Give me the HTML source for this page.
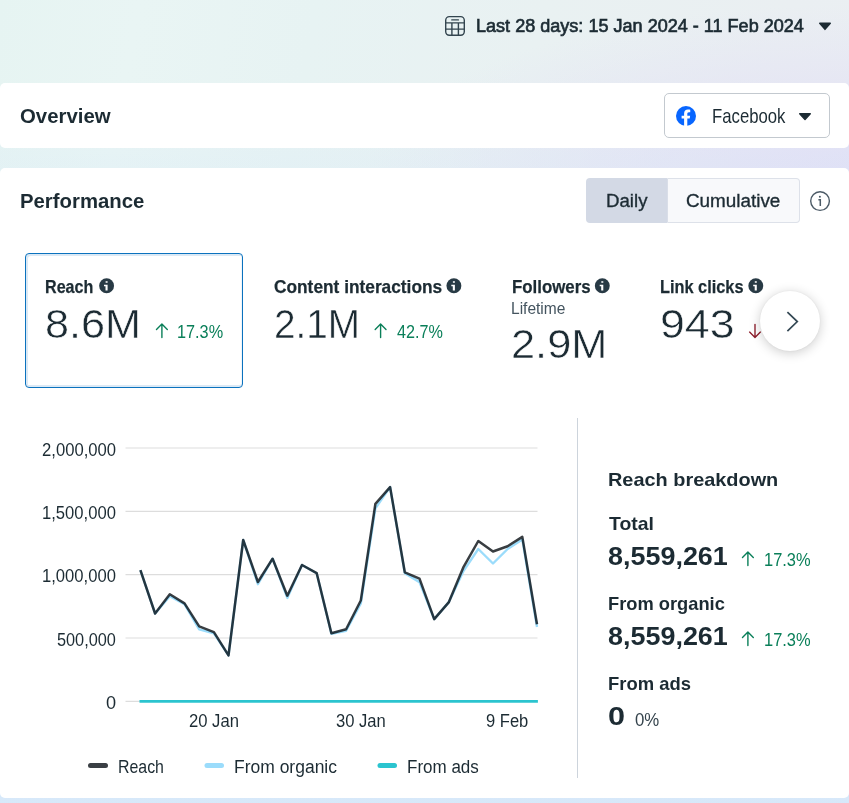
<!DOCTYPE html>
<html><head><meta charset="utf-8">
<style>
*{box-sizing:border-box;margin:0;padding:0}
html,body{width:849px;height:803px;overflow:hidden}
body{font-family:"Liberation Sans",sans-serif;color:#1c2b33;position:relative;
background:linear-gradient(to bottom,rgba(214,232,250,0) 0%,rgba(214,232,250,0) 14%,rgba(214,232,250,.2) 20%,rgba(214,232,250,.95) 100%),radial-gradient(ellipse 480px 170px at 100% 175px,rgba(226,223,245,1) 0%,rgba(226,223,245,.55) 50%,rgba(226,223,245,0) 100%),linear-gradient(100deg,#e6f4f2 0%,#e9f5f4 14%,#e7f3f3 32%,#e9f1f2 55%,#eaeff2 80%,#ebeff3 100%);}
.abs{position:absolute}
.card{position:absolute;background:#fff;border-radius:5px}
.t{position:absolute;white-space:nowrap;line-height:1;transform-origin:0 0}
</style></head><body>
<!-- top bar icons -->
<svg class="abs" style="left:440px;top:12px" width="30" height="28" viewBox="440 12 30 28" fill="none" stroke="#33454f" stroke-width="1.4">
<rect x="445.7" y="16.6" width="18.6" height="18.6" rx="3.6"/>
<path d="M445.7 22.9H464.3M445.7 29.1H464.3M451.9 22.9V35.2M458.4 22.9V35.2"/>
<path d="M451.8 19.9H458.4" stroke-linecap="round"/>
</svg>
<svg class="abs" style="left:818px;top:22px" width="14" height="9" viewBox="0 0 14 9"><path d="M1.7 1.2H12.3L7 7.4Z" fill="#1c2b33" stroke="#1c2b33" stroke-width="1.4" stroke-linejoin="round"/></svg>

<!-- overview card -->
<div class="card" style="left:0;top:83px;width:849px;height:65px"></div>
<div class="abs" style="left:664px;top:93px;width:166px;height:45px;border:1px solid #c3c9cf;border-radius:5px;background:#fff"></div>
<svg class="abs" style="left:675px;top:105px" width="22" height="22" viewBox="0 0 22 22"><circle cx="11" cy="11" r="10" fill="#0866ff"/><path d="M12.3 21V13.6h2.4l.45-2.9H12.3V8.9c0-.85.4-1.6 1.65-1.6h1.3V4.8s-1.15-.2-2.3-.2c-2.35 0-3.85 1.4-3.85 3.95v2.15H6.6v2.9h2.5V21z" fill="#fff"/></svg>
<svg class="abs" style="left:798px;top:111.7px" width="14" height="9" viewBox="0 0 14 9"><path d="M1.7 1.7H12.3L7 7.6Z" fill="#1c2b33" stroke="#1c2b33" stroke-width="1.4" stroke-linejoin="round"/></svg>

<!-- performance card -->
<div class="card" style="left:0;top:168px;width:849px;height:630px"></div>
<div class="abs" style="left:586px;top:178px;width:81px;height:45px;background:#d3d9e5;border-radius:4px 0 0 4px"></div>
<div class="abs" style="left:666.5px;top:178px;width:133.5px;height:45px;background:#f8f9fb;border:1px solid #dde1e9;border-left-color:#d9dee8;border-radius:0 4px 4px 0"></div>
<svg class="abs" style="left:809px;top:190px" width="22" height="22" viewBox="0 0 22 22" fill="none" stroke="#4b5a66" stroke-width="1.4"><circle cx="11.05" cy="11.05" r="9.35"/><path d="M9.4 9.7H11.3V16.1" stroke-width="1.5"/><circle cx="10.9" cy="6.7" r="1" fill="#4b5a66" stroke="none"/></svg>

<!-- metric cards -->
<div class="abs" style="left:25px;top:253px;width:218px;height:135px;border:1px solid #0b72be;border-radius:4px;box-shadow:inset 2px 2px 0 #dbe9f5,inset 0 -2px 0 #dbe9f5,inset -1px 0 0 #eef5fb"></div>

<svg class="abs" style="left:0;top:270px" width="849" height="90" viewBox="0 270 849 90">
<g transform="translate(106.6 285.8)"><circle r="7.45" fill="#283a45"/><path d="M-1 -4.6h2v1.5h-2zM-2.6 -1.1h3.6v5.9h-2.1v-4.4h-1.5z" fill="#fff"/></g>
<g transform="translate(453.9 285.8)"><circle r="7.45" fill="#283a45"/><path d="M-1 -4.6h2v1.5h-2zM-2.6 -1.1h3.6v5.9h-2.1v-4.4h-1.5z" fill="#fff"/></g>
<g transform="translate(602.3 285.8)"><circle r="7.45" fill="#283a45"/><path d="M-1 -4.6h2v1.5h-2zM-2.6 -1.1h3.6v5.9h-2.1v-4.4h-1.5z" fill="#fff"/></g>
<g transform="translate(755.8 285.8)"><circle r="7.45" fill="#283a45"/><path d="M-1 -4.6h2v1.5h-2zM-2.6 -1.1h3.6v5.9h-2.1v-4.4h-1.5z" fill="#fff"/></g>
<g transform="translate(161.9 338)" fill="none" stroke="#0a7f59" stroke-width="1.4" stroke-linecap="round" stroke-linejoin="round"><path d="M0 -0.5V-13.9M-5.4 -8.6L0 -13.9L5.4 -8.6"/></g>
<g transform="translate(380.6 338)" fill="none" stroke="#0a7f59" stroke-width="1.4" stroke-linecap="round" stroke-linejoin="round"><path d="M0 -0.5V-13.9M-5.4 -8.6L0 -13.9L5.4 -8.6"/></g>
<g fill="none" stroke="#8c1d2b" stroke-width="1.35" stroke-linecap="round" stroke-linejoin="round"><path d="M755 324.3V337.4M749.6 332.1L755 337.5L760.4 332.1"/></g>
</svg>

<div class="abs" style="left:736px;top:268px;width:94px;height:112px;overflow:hidden"><div class="abs" style="left:24px;top:23px;width:60px;height:60px;border-radius:50%;background:#fff;box-shadow:0 2px 12px rgba(0,0,0,.2),0 0 2px rgba(0,0,0,.06)"></div></div>
<svg class="abs" style="left:780px;top:309px" width="24" height="26" viewBox="780 309 24 26" fill="none" stroke="#344854" stroke-width="1.7" stroke-linecap="butt" stroke-linejoin="miter"><path d="M787.4 312.1L797.3 321.6L787.4 331.1"/></svg>

<!-- chart -->
<svg class="abs" style="left:0;top:410px" width="849" height="387" viewBox="0 410 849 387">
<g stroke="#dddddd" stroke-width="1.2">
<path d="M125.5 448H537.5M125.5 511.3H537.5M125.5 574.7H537.5M125.5 638H537.5M125.5 701.4H140"/>
</g>
<path d="M577.5 418V778" stroke="#cdd4dc" stroke-width="1"/>
<polyline fill="none" stroke="#9bdcfb" stroke-width="2.4" stroke-linejoin="round" points="140.4,570.2 155.1,613.5 169.8,596.3 184.5,604.2 199.2,629.4 213.9,633.3 228.5,655.4 243.2,540.0 257.9,584.2 272.6,558.7 287.3,597.9 302.0,565.0 316.7,573.2 331.4,633.7 346.1,630.7 360.8,603.5 375.4,508.3 390.1,487.1 404.8,573.3 419.5,582.1 434.2,619.1 448.9,602.1 463.6,570.8 478.3,549.0 493.0,563.5 507.6,549.0 522.3,539.4 537.0,627.0"/>
<polyline fill="none" stroke="#393e42" stroke-width="2.5" stroke-linejoin="round" style="mix-blend-mode:multiply" points="140.4,570.2 155.1,613.5 169.8,594.3 184.5,603.4 199.2,626.4 213.9,632.1 228.5,655.4 243.2,540.0 257.9,582.0 272.6,558.7 287.3,595.7 302.0,565.0 316.7,573.2 331.4,633.2 346.1,629.2 360.8,600.5 375.4,503.8 390.1,487.1 404.8,572.3 419.5,578.6 434.2,619.1 448.9,602.1 463.6,566.8 478.3,541.0 493.0,551.5 507.6,546.3 522.3,536.9 537.0,624.3"/>
<path d="M139.5 701.4H537.9" stroke="#2bc4cf" stroke-width="2.6"/>
<g stroke-width="5" stroke-linecap="round">
<path d="M90.5 765.5H105.5" stroke="#3a3f44"/>
<path d="M207 765.5H221.5" stroke="#9bdcfb"/>
<path d="M380 765.5H394.5" stroke="#2bc4cf"/>
</g>
<g fill="none" stroke="#0a7f59" stroke-width="1.4" stroke-linecap="round" stroke-linejoin="round">
<path d="M747.9 565.5V552.1M742.5 557.4L747.9 552.1L753.3 557.4"/>
<path d="M747.9 645.5V632.1M742.5 637.4L747.9 632.1L753.3 637.4"/>
</g>
</svg>

<div id="txt" style="position:absolute;left:0;top:0;width:849px;height:803px;will-change:transform">
<div class="t" id="date" style="left:475.76px;top:17.00px;font-size:18.18px;font-weight:400;color:#1c2b33;transform:scaleX(0.9935);-webkit-text-stroke:.65px #1c2b33;">Last 28 days: 15 Jan 2024 - 11 Feb 2024</div>
<div class="t" id="ov" style="left:19.69px;top:106.00px;font-size:20.00px;font-weight:700;color:#1c2b33;transform:scaleX(1.0183);">Overview</div>
<div class="t" id="fb" style="left:711.56px;top:106.00px;font-size:20.36px;font-weight:400;color:#1c2b33;transform:scaleX(0.8217);">Facebook</div>
<div class="t" id="perf" style="left:20.08px;top:192.00px;font-size:19.93px;font-weight:700;color:#1c2b33;transform:scaleX(1.0206);">Performance</div>
<div class="t" id="daily" style="left:605.81px;top:191.00px;font-size:19.20px;font-weight:400;color:#1c2b33;transform:scaleX(0.9723);-webkit-text-stroke:.35px #1c2b33;">Daily</div>
<div class="t" id="cum" style="left:686.16px;top:191.00px;font-size:19.20px;font-weight:400;color:#1c2b33;transform:scaleX(0.9832);-webkit-text-stroke:.35px #1c2b33;">Cumulative</div>
<div class="t" id="m1" style="left:45.23px;top:278.00px;font-size:18.91px;font-weight:700;color:#1c2b33;transform:scaleX(0.8518);-webkit-text-stroke:.25px #1c2b33;">Reach</div>
<div class="t" id="v1" style="left:45.47px;top:305.00px;font-size:40.29px;font-weight:400;color:#1c2b33;transform:scaleX(1.0727);-webkit-text-stroke:.5px #fff;">8.6M</div>
<div class="t" id="p1" style="left:177.46px;top:323.00px;font-size:18.91px;font-weight:400;color:#0a7f59;transform:scaleX(0.8600);">17.3%</div>
<div class="t" id="m2" style="left:273.51px;top:278.00px;font-size:18.91px;font-weight:700;color:#1c2b33;transform:scaleX(0.9149);-webkit-text-stroke:.25px #1c2b33;">Content interactions</div>
<div class="t" id="v2" style="left:274.06px;top:305.00px;font-size:40.29px;font-weight:400;color:#1c2b33;transform:scaleX(0.9620);-webkit-text-stroke:.5px #fff;">2.1M</div>
<div class="t" id="p2" style="left:396.58px;top:323.00px;font-size:18.91px;font-weight:400;color:#0a7f59;transform:scaleX(0.8579);">42.7%</div>
<div class="t" id="m3" style="left:511.59px;top:278.00px;font-size:18.91px;font-weight:700;color:#1c2b33;transform:scaleX(0.8908);-webkit-text-stroke:.25px #1c2b33;">Followers</div>
<div class="t" id="l3" style="left:510.76px;top:300.00px;font-size:16.44px;font-weight:400;color:#44545f;transform:scaleX(0.9451);">Lifetime</div>
<div class="t" id="v3" style="left:511.33px;top:325.00px;font-size:40.29px;font-weight:400;color:#1c2b33;transform:scaleX(1.0766);-webkit-text-stroke:.5px #fff;">2.9M</div>
<div class="t" id="m4" style="left:660.22px;top:278.00px;font-size:18.91px;font-weight:700;color:#1c2b33;transform:scaleX(0.8632);-webkit-text-stroke:.25px #1c2b33;">Link clicks</div>
<div class="t" id="v4" style="left:660.21px;top:305.00px;font-size:40.29px;font-weight:400;color:#1c2b33;transform:scaleX(1.1083);-webkit-text-stroke:.5px #fff;">943</div>
<div class="t" id="y1" style="left:41.57px;top:442.00px;font-size:17.45px;font-weight:400;color:#1c2b33;transform:scaleX(0.9550);">2,000,000</div>
<div class="t" id="y2" style="left:41.74px;top:505.00px;font-size:17.45px;font-weight:400;color:#1c2b33;transform:scaleX(0.9528);">1,500,000</div>
<div class="t" id="y3" style="left:41.74px;top:568.00px;font-size:17.45px;font-weight:400;color:#1c2b33;transform:scaleX(0.9528);">1,000,000</div>
<div class="t" id="y4" style="left:56.75px;top:632.00px;font-size:17.45px;font-weight:400;color:#1c2b33;transform:scaleX(0.9344);">500,000</div>
<div class="t" id="y5" style="left:105.66px;top:695.00px;font-size:17.45px;font-weight:400;color:#1c2b33;transform:scaleX(1.0409);">0</div>
<div class="t" id="x1" style="left:189.07px;top:713.00px;font-size:17.45px;font-weight:400;color:#1c2b33;transform:scaleX(0.9537);">20 Jan</div>
<div class="t" id="x2" style="left:336.10px;top:713.00px;font-size:17.45px;font-weight:400;color:#1c2b33;transform:scaleX(0.9511);">30 Jan</div>
<div class="t" id="x3" style="left:486.34px;top:713.00px;font-size:17.45px;font-weight:400;color:#1c2b33;transform:scaleX(0.9493);">9 Feb</div>
<div class="t" id="lg1" style="left:118.33px;top:758.00px;font-size:18.04px;font-weight:400;color:#1c2b33;transform:scaleX(0.8815);">Reach</div>
<div class="t" id="lg2" style="left:234.10px;top:758.00px;font-size:18.04px;font-weight:400;color:#1c2b33;transform:scaleX(0.9697);">From organic</div>
<div class="t" id="lg3" style="left:406.64px;top:758.00px;font-size:18.04px;font-weight:400;color:#1c2b33;transform:scaleX(0.9434);">From ads</div>
<div class="t" id="rb" style="left:607.61px;top:471.00px;font-size:18.91px;font-weight:700;color:#1c2b33;transform:scaleX(1.0523);">Reach breakdown</div>
<div class="t" id="r1" style="left:608.61px;top:515.00px;font-size:18.91px;font-weight:700;color:#1c2b33;transform:scaleX(1.0285);">Total</div>
<div class="t" id="n1" style="left:607.99px;top:544.00px;font-size:25.75px;font-weight:700;color:#1c2b33;transform:scaleX(1.0459);">8,559,261</div>
<div class="t" id="q1" style="left:763.75px;top:551.00px;font-size:18.91px;font-weight:400;color:#0a7f59;transform:scaleX(0.8697);">17.3%</div>
<div class="t" id="r2" style="left:607.70px;top:595.00px;font-size:18.91px;font-weight:700;color:#1c2b33;transform:scaleX(0.9673);">From organic</div>
<div class="t" id="n2" style="left:607.99px;top:624.00px;font-size:25.75px;font-weight:700;color:#1c2b33;transform:scaleX(1.0459);">8,559,261</div>
<div class="t" id="q2" style="left:763.75px;top:631.00px;font-size:18.91px;font-weight:400;color:#0a7f59;transform:scaleX(0.8697);">17.3%</div>
<div class="t" id="r3" style="left:607.69px;top:675.00px;font-size:18.91px;font-weight:700;color:#1c2b33;transform:scaleX(0.9748);">From ads</div>
<div class="t" id="n3" style="left:607.88px;top:704.00px;font-size:25.75px;font-weight:700;color:#1c2b33;transform:scaleX(1.1888);">0</div>
<div class="t" id="q3" style="left:635.00px;top:711.00px;font-size:18.91px;font-weight:400;color:#34434c;transform:scaleX(0.8889);">0%</div>
</div>
</body></html>
